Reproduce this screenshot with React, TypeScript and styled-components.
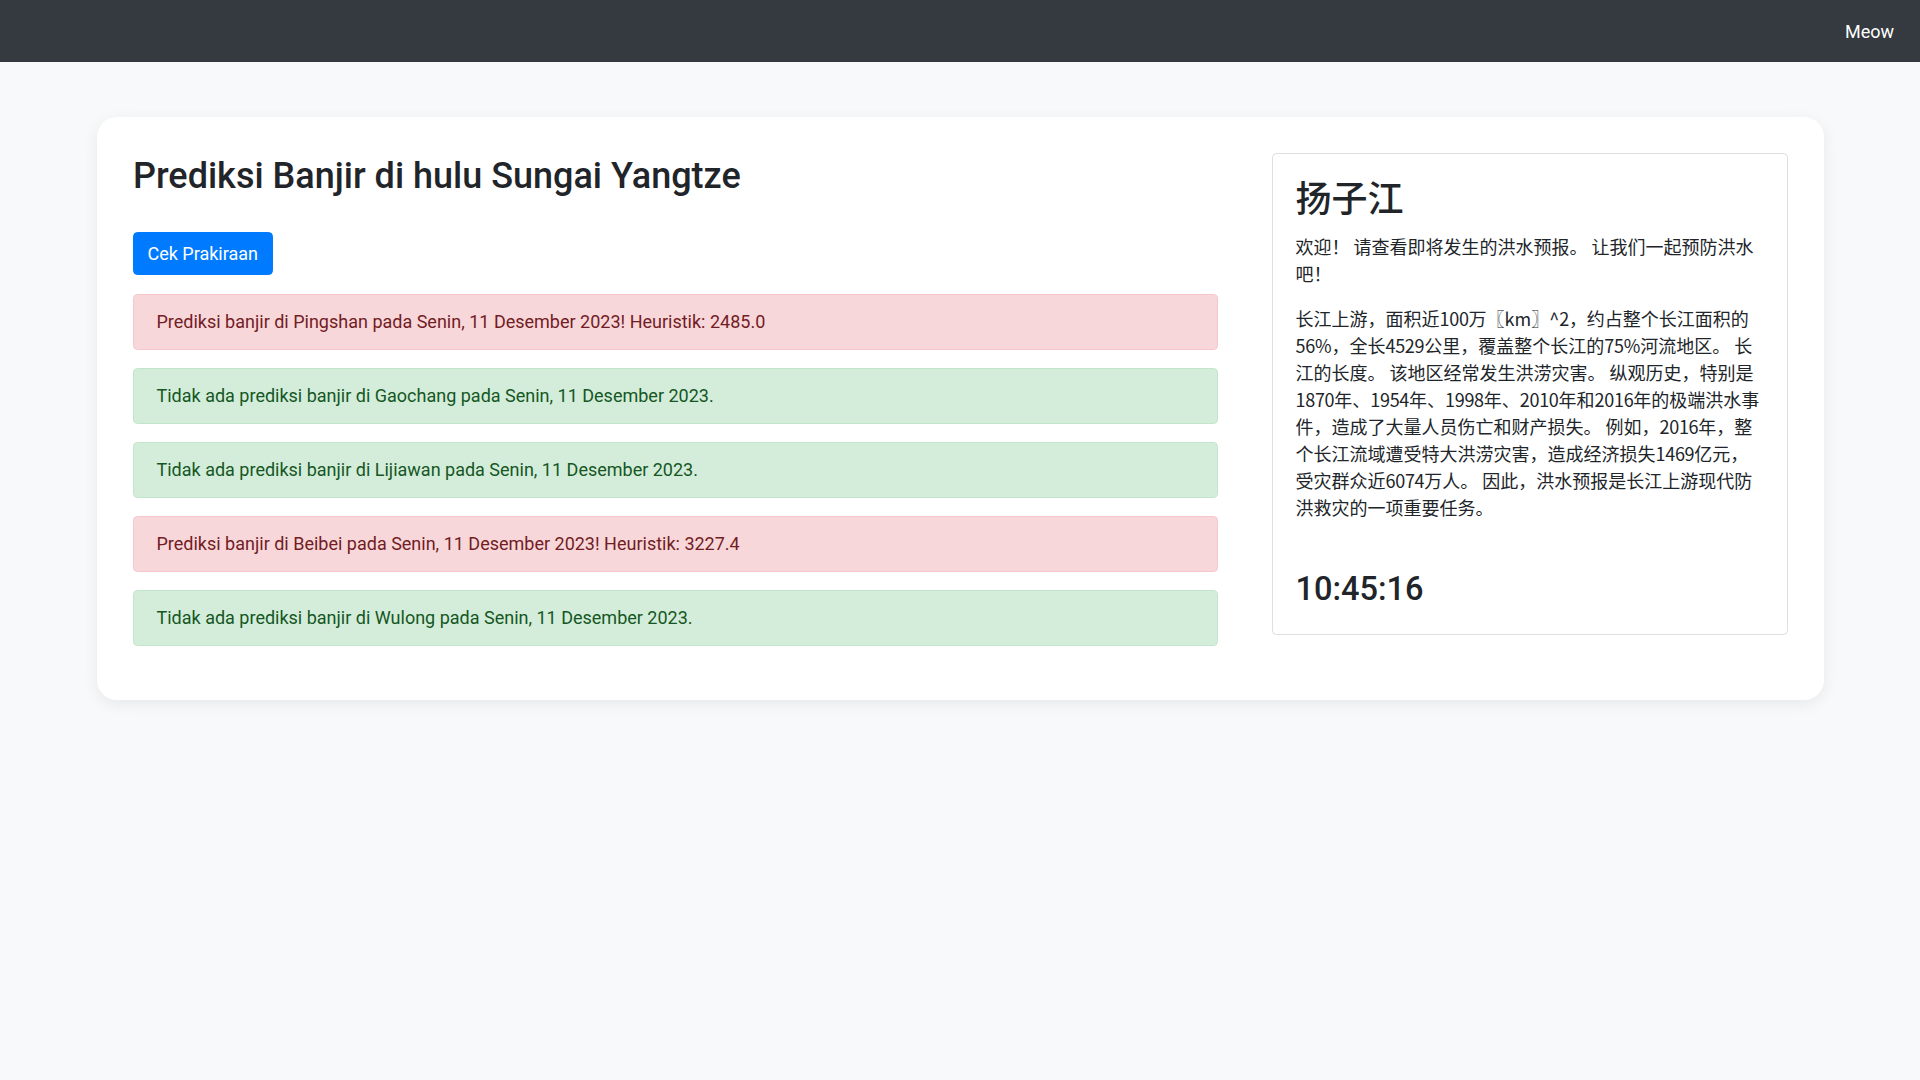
import React from 'react';
import styled, { createGlobalStyle } from 'styled-components';

const GlobalStyle = createGlobalStyle`
  body {
    margin: 0;
    background-color: #f8f9fa;
    color: #212529;
    font-family: Roboto, 'Noto Sans CJK SC', sans-serif;
    font-size: 18px;
    line-height: 1.5;
  }
`;

const Navbar = styled.nav`
  height: 62px;
  background-color: #343a40;
  display: flex;
  align-items: center;
  justify-content: flex-end;
  padding: 0 26px;
`;

const NavLink = styled.a`
  color: #fff;
  font-size: 18px;
  text-decoration: none;
`;

const Main = styled.main`
  padding: 55px 96px 40px 97px;
`;

const Panel = styled.div`
  background-color: #fff;
  border-radius: 20px;
  box-shadow: 0 4px 16px rgba(0, 0, 0, 0.07);
  padding: 36px;
  display: grid;
  grid-template-columns: 1fr 516px;
  gap: 54px;
  align-items: start;
`;

const Title = styled.h1`
  margin: 2px 0 34px;
  font-size: 36px;
  font-weight: 500;
  line-height: 1.2;
`;

const Button = styled.button`
  display: block;
  background-color: #007bff;
  color: #fff;
  border: 1px solid #007bff;
  border-radius: 4.5px;
  padding: 6.75px 13.5px;
  font-family: inherit;
  font-size: 18px;
  line-height: 1.5;
  margin-bottom: 19px;
  cursor: pointer;
`;

const Alert = styled.div<{ danger?: boolean }>`
  padding: 13.5px 22.5px;
  margin-bottom: 18px;
  border: 1px solid ${(p) => (p.danger ? '#f5c6cb' : '#c3e6cb')};
  border-radius: 4.5px;
  background-color: ${(p) => (p.danger ? '#f8d7da' : '#d4edda')};
  color: ${(p) => (p.danger ? '#721c24' : '#155724')};
`;

const InfoCard = styled.div`
  border: 1px solid rgba(0, 0, 0, 0.125);
  border-radius: 4.5px;
  padding: 22.5px;
`;

const CardTitle = styled.h2`
  margin: 0 0 13.5px;
  padding-top: 3px;
  font-size: 36px;
  font-weight: 500;
  line-height: 40px;
`;

const Text = styled.p`
  margin: 0 0 18px;
  font-family: 'Noto Sans CJK SC', sans-serif;
`;

// digits a touch tighter, closer to the original system font
const Num = styled.span`
  letter-spacing: -0.3px;
`;

const Clock = styled.h2`
  margin: 47px 0 0;
  font-size: 32.5px;
  font-weight: 500;
  line-height: 43px;
`;

const forecasts = [
  { danger: true, text: 'Prediksi banjir di Pingshan pada Senin, 11 Desember 2023! Heuristik: 2485.0' },
  { danger: false, text: 'Tidak ada prediksi banjir di Gaochang pada Senin, 11 Desember 2023.' },
  { danger: false, text: 'Tidak ada prediksi banjir di Lijiawan pada Senin, 11 Desember 2023.' },
  { danger: true, text: 'Prediksi banjir di Beibei pada Senin, 11 Desember 2023! Heuristik: 3227.4' },
  { danger: false, text: 'Tidak ada prediksi banjir di Wulong pada Senin, 11 Desember 2023.' },
];

const about =
  '长江上游，面积近100万〖km〗^2，约占整个长江面积的56%，全长4529公里，覆盖整个长江的75%河流地区。 长江的长度。 该地区经常发生洪涝灾害。 纵观历史，特别是1870年、1954年、1998年、2010年和2016年的极端洪水事件，造成了大量人员伤亡和财产损失。 例如，2016年，整个长江流域遭受特大洪涝灾害，造成经济损失1469亿元，受灾群众近6074万人。 因此，洪水预报是长江上游现代防洪救灾的一项重要任务。';

const withNumbers = (text: string) =>
  text.split(/(\d+)/).map((part, i) => (/^\d+$/.test(part) ? <Num key={i}>{part}</Num> : part));

function App() {
  return (
    <>
      <GlobalStyle />
      <Navbar>
        <NavLink href="#">Meow</NavLink>
      </Navbar>
      <Main>
        <Panel>
          <div>
            <Title>Prediksi Banjir di hulu Sungai Yangtze</Title>
            <Button>Cek Prakiraan</Button>
            {forecasts.map((f, i) => (
              <Alert key={i} danger={f.danger}>
                {f.text}
              </Alert>
            ))}
          </div>
          <InfoCard>
            <CardTitle>扬子江</CardTitle>
            <Text>欢迎！ 请查看即将发生的洪水预报。 让我们一起预防洪水吧！</Text>
            <Text>{withNumbers(about)}</Text>
            <Clock>10:45:16</Clock>
          </InfoCard>
        </Panel>
      </Main>
    </>
  );
}

export default App;
